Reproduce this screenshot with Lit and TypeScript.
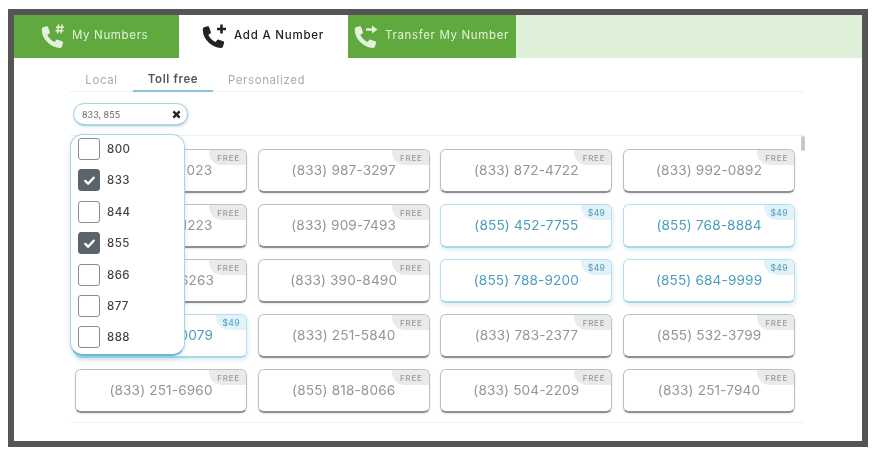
import { LitElement, html, css, svg } from "lit";
import { customElement } from "lit/decorators.js";

type Card = { num: string; price?: string };
const cards: Card[] = [
  { num: "(833) 872-1023" }, { num: "(833) 987-3297" }, { num: "(833) 872-4722" }, { num: "(833) 992-0892" },
  { num: "(833) 909-1223" }, { num: "(833) 909-7493" }, { num: "(855) 452-7755", price: "$49" }, { num: "(855) 768-8884", price: "$49" },
  { num: "(833) 390-6263" }, { num: "(833) 390-8490" }, { num: "(855) 788-9200", price: "$49" }, { num: "(855) 684-9999", price: "$49" },
  { num: "(855) 788-0079", price: "$49" }, { num: "(833) 251-5840" }, { num: "(833) 783-2377" }, { num: "(855) 532-3799" },
  { num: "(833) 251-6960" }, { num: "(855) 818-8066" }, { num: "(833) 504-2209" }, { num: "(833) 251-7940" },
];
const options = [
  { code: "800", on: false }, { code: "833", on: true }, { code: "844", on: false }, { code: "855", on: true },
  { code: "866", on: false }, { code: "877", on: false }, { code: "888", on: false },
];

const handset = svg`<path transform="translate(0 2.5)" d="M5 3.8 L8.4 2.8 C9.2 2.5 9.9 2.9 10.2 3.7 L11.8 8.5 C12 9.2 11.8 9.8 11.2 10.2 L9.3 11.3 C10.6 14.5 13.3 17.2 16.6 18.6 L18 16.7 C18.4 16.2 19 16 19.7 16.2 L24.2 17.8 C25 18.1 25.3 18.8 25.1 19.6 L24 23.1 C23.7 24.1 23 24.6 22 24.5 C12.4 24 4.2 15.8 3.8 7 C3.7 5.4 4 4.2 5 3.8 Z"/>`;

@customElement("app-root")
export class AppRoot extends LitElement {
  static styles = css`
    :host { display: block; width: 875px; height: 459px; background: #fff; font-family: "Inter", "Liberation Sans", sans-serif; overflow: hidden; }
    .frame { box-sizing: border-box; width: 860px; height: 438px; margin: 9px 0 0 8px; border: 6px solid #555; background: #fff; filter: blur(0.35px); }
    .tabs { display: flex; height: 43px; background: #dff0d8; }
    .tab { box-sizing: border-box; display: flex; align-items: center; font-size: 11.5px; letter-spacing: 0.65px; color: #e4f2dc; background: #5fa93f; }
    .tab span { padding-bottom: 3px; }
    .tab svg { flex: none; width: 32px; height: 32px; fill: currentColor; }
    .ln { fill: none; stroke: currentColor; }
    .hash { stroke-width: 1.5; }
    .plus { stroke-width: 2.6; }
    .shaft { stroke-width: 2.4; }
    .t1 { width: 165px; padding-left: 24px; gap: 2px; }
    .t2 { width: 169px; padding-left: 20px; gap: 3px; background: #fff; color: #222; font-weight: 500; letter-spacing: 0.78px; }
    .t3 { width: 168px; padding-left: 3px; gap: 2px; }
    .content { position: relative; padding: 0 58px 0 56px; }
    .sub { display: flex; height: 33px; border-bottom: 1px solid #eef0f0; font-size: 11.5px; letter-spacing: 0.6px; color: #aaa; }
    .sub div { display: flex; align-items: center; justify-content: center; height: 34px; box-sizing: border-box; padding-top: 9px; }
    .s1 { width: 63px; }
    .s2 { width: 80px; color: #555; font-weight: 600; border-bottom: 2px solid #8cc4dc; }
    .s3 { width: 107px; }
    .chip { box-sizing: border-box; display: flex; align-items: center; justify-content: space-between; width: 115px; height: 23px; margin: 11px 0 9px 3px; padding: 0 6px 0 8px; border: 1px solid #a6d6e6; border-bottom-width: 2px; border-radius: 12px; box-shadow: 1px 1px 3px rgba(0,0,0,.12); font-size: 9px; color: #666; }
    .chip svg { width: 9px; height: 9px; stroke: #222; stroke-width: 2.6; }
    .list { position: relative; height: 288px; border-top: 1px solid #f0f1f1; border-bottom: 1px solid #f0f1f1; box-sizing: border-box; padding: 13px 0 0 5px; }
    .grid { display: grid; grid-template-columns: repeat(4, 172px); column-gap: 10.7px; row-gap: 11px; grid-auto-rows: 44px; }
    .card { position: relative; display: flex; align-items: center; justify-content: center; box-sizing: border-box; padding-bottom: 2px; border: 1px solid #bdbfc0; border-bottom: 2px solid #8b9194; border-radius: 6px; font-size: 13.6px; letter-spacing: 0.15px; color: #939597; box-shadow: 0 1px 2px rgba(0,0,0,.1); overflow: hidden; }
    .card.paid { border-color: #b5dfec; border-bottom: 2px solid #a8d8e8; color: #4b9dbd; box-shadow: 1px 2px 4px rgba(70,150,190,.2); }
    .badge { position: absolute; top: 0; right: 0; width: 37px; height: 15px; display: flex; align-items: center; justify-content: flex-end; padding-right: 6px; box-sizing: border-box; background: #e9eaea; border-bottom-left-radius: 13px; font-size: 8px; letter-spacing: 0.8px; color: #999; font-weight: 500; }
    .paid .badge { background: #e2f2f8; color: #5aa6c4; width: 30px; font-size: 8.5px; letter-spacing: 0.4px; }
    .scroll { position: absolute; left: 731px; top: 0; width: 4px; height: 15px; border-radius: 2px; background: #c6c9cb; }
    .menu { position: absolute; left: 56px; top: 76px; box-sizing: border-box; width: 115px; height: 222px; padding: 3px 0 0 7px; background: #fff; border: 1px solid #a6d6e6; border-bottom: 2px solid #6fb8d4; border-radius: 13px; box-shadow: 0 2px 5px rgba(80,150,190,.25); display: flex; flex-direction: column; gap: 9.4px; }
    .opt { display: flex; align-items: center; gap: 7px; height: 22px; font-size: 11.5px; letter-spacing: 0.4px; color: #444; font-weight: 500; }
    .box { box-sizing: border-box; width: 22px; height: 22px; border: 1.5px solid #8a8d90; border-radius: 3px; display: flex; align-items: center; justify-content: center; }
    .box.on { background: #5b646c; border-color: #5b646c; }
    .box svg { width: 13px; height: 13px; fill: none; stroke: #fff; stroke-width: 2.6; stroke-linecap: round; stroke-linejoin: round; }
  `;

  render() {
    return html`<div class="frame">
      <nav class="tabs">
        <div class="tab t1"><svg viewBox="0 0 32 32">${handset}<path class="ln hash" d="M20.5 3.5l-1 9M24 3.5l-1 9M18 6.2h8M17.5 9.8h8"/></svg><span>My Numbers</span></div>
        <div class="tab t2"><svg viewBox="0 0 32 32">${handset}<path class="ln plus" d="M22.5 3.5v9M18 8h9"/></svg><span>Add A Number</span></div>
        <div class="tab t3"><svg viewBox="0 0 32 32">${handset}<path class="ln shaft" d="M15 8.5h7"/><path d="M21 4.5l5.5 4-5.5 4z"/></svg><span>Transfer My Number</span></div>
      </nav>
      <div class="content">
        <div class="sub"><div class="s1">Local</div><div class="s2">Toll free</div><div class="s3">Personalized</div></div>
        <div class="chip"><span>833, 855</span><svg viewBox="0 0 10 10"><path d="M1.5 1.5l7 7M8.5 1.5l-7 7"/></svg></div>
        <div class="list">
          <div class="scroll"></div>
          <div class="grid">
            ${cards.map((c) => html`<div class="card ${c.price ? "paid" : ""}">${c.num}<span class="badge">${c.price ?? "FREE"}</span></div>`)}
          </div>
        </div>
        <div class="menu">
          ${options.map((o) => html`<div class="opt"><span class="box ${o.on ? "on" : ""}">${o.on ? html`<svg viewBox="0 0 14 14"><path d="M2.5 7.5l3 3 6-6.5"/></svg>` : ""}</span>${o.code}</div>`)}
        </div>
      </div>
    </div>`;
  }
}
